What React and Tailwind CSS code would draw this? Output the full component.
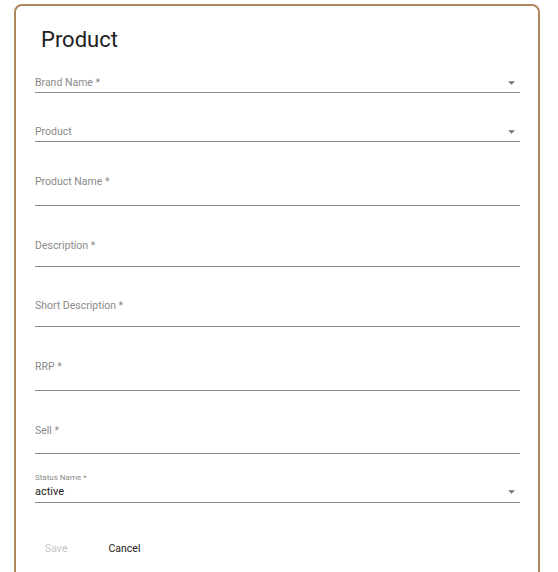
const Arrow = () => (
  <svg width="7" height="4" viewBox="0 0 10 5" className="mr-[5px] mb-[6px]">
    <path d="M0 0h10L5 5z" fill="#757575" />
  </svg>
);

const SelectField = ({ label, mt }) => (
  <div className={`${mt} flex items-end justify-between border-b border-[#8c8c8c] pb-[1px]`}>
    <label className="block text-[10.5px] leading-[16px] text-[#8a8a8a]">{label}</label>
    <Arrow />
  </div>
);

const TextField = ({ label, mt, pb }) => (
  <div className={`${mt} ${pb} border-b border-[#8c8c8c]`}>
    <label className="block text-[10.5px] leading-[16px] text-[#8a8a8a]">{label}</label>
  </div>
);

export default function App() {
  return (
    <div className="bg-white min-h-screen overflow-hidden" style={{ fontFamily: "Roboto, 'Liberation Sans', sans-serif" }}>
      <div className="ml-[14px] mt-[4px] w-[526px] h-[620px] rounded-lg border-2 border-[#b0885e] pl-[19px] pr-[18px]">
        <h1 className="ml-[6px] mt-[20px] text-[22px] leading-[28px] text-[#212121]">Product</h1>
        <SelectField label="Brand Name *" mt="mt-[21px]" />
        <SelectField label="Product" mt="mt-[31px]" />
        <TextField label="Product Name *" mt="mt-[32px]" pb="pb-[15px]" />
        <TextField label="Description *" mt="mt-[32px]" pb="pb-[12px]" />
        <TextField label="Short Description *" mt="mt-[31px]" pb="pb-[12px]" />
        <TextField label="RRP *" mt="mt-[32px]" pb="pb-[15px]" />
        <TextField label="Sell *" mt="mt-[32px]" pb="pb-[14px]" />
        <div className="mt-[19px] border-b border-[#8c8c8c] pb-[2px]">
          <label className="block text-[8px] leading-[10px] text-[#8a8a8a]">Status Name *</label>
          <div className="flex items-end justify-between">
            <span className="text-[11px] leading-[17px] text-[#222]">active</span>
            <svg width="7" height="4" viewBox="0 0 10 5" className="mr-[5px] mb-[6px]">
              <path d="M0 0h10L5 5z" fill="#757575" />
            </svg>
          </div>
        </div>
        <div className="mt-[38px] flex items-center gap-[41px] pl-[10px] text-[10.5px] leading-[16px]">
          <button className="text-[#c4c4c4]">Save</button>
          <button className="text-[#222]">Cancel</button>
        </div>
      </div>
    </div>
  );
}
